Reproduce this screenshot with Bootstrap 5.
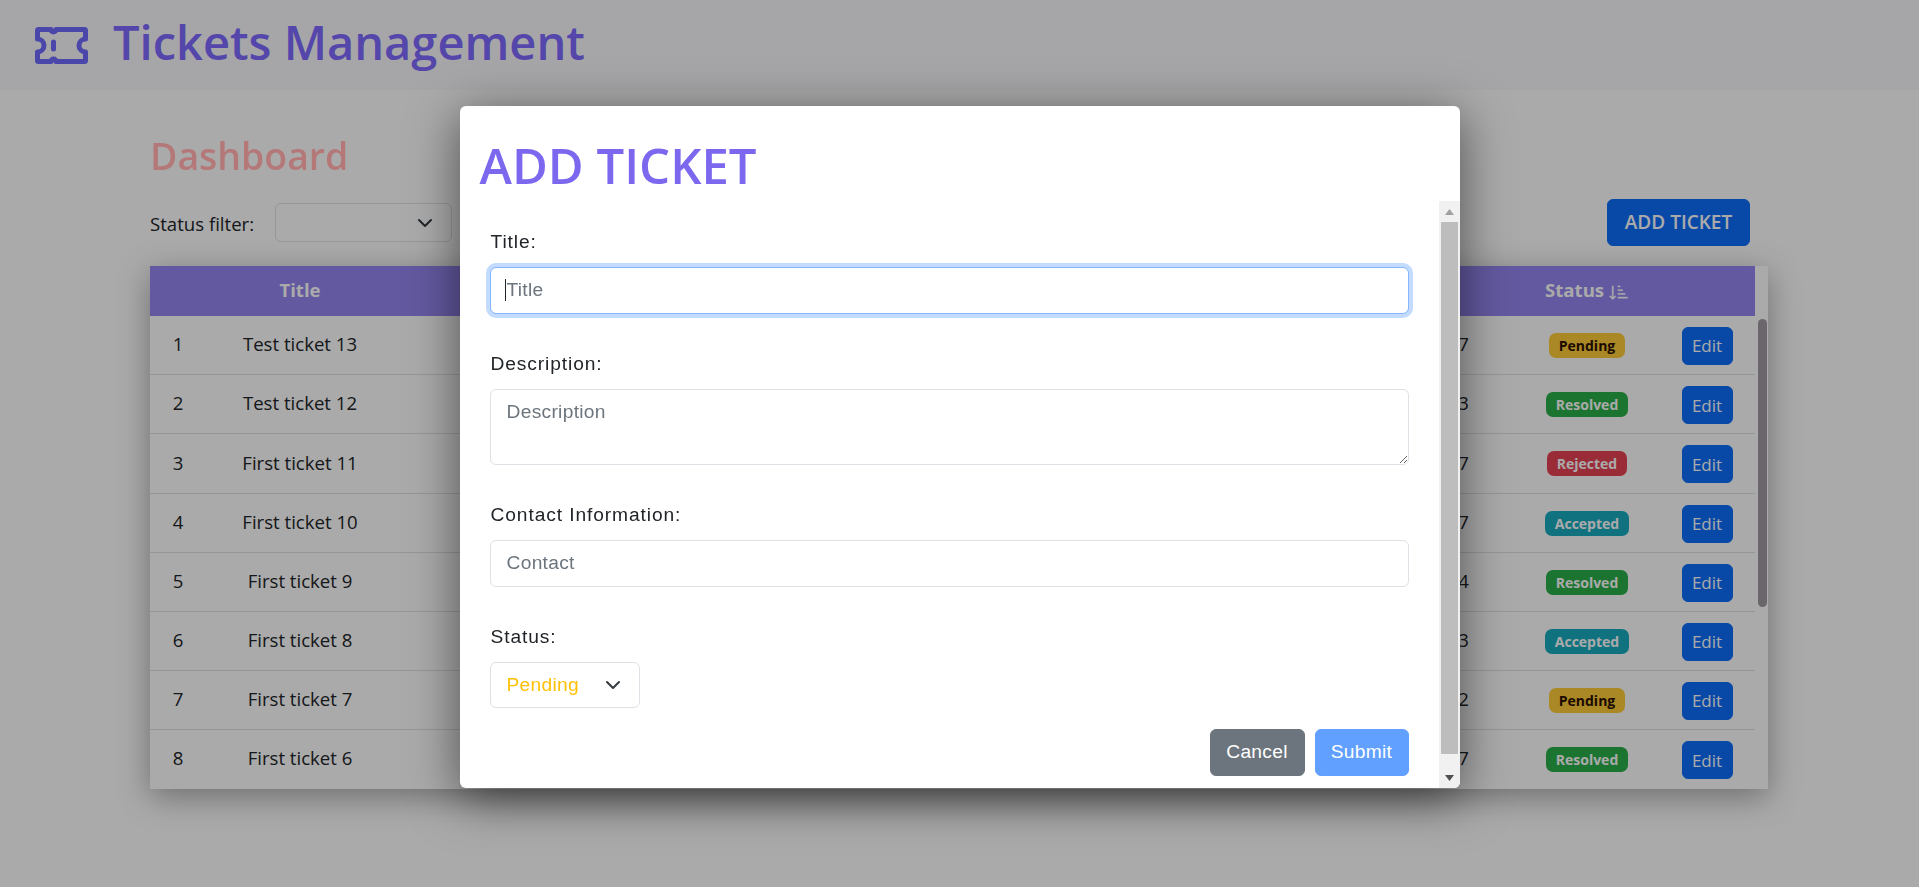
<!DOCTYPE html>
<html lang="en">
<head>
    <meta charset="UTF-8">
    <meta name="viewport" content="width=device-width, initial-scale=1.0">
    <title>Tickets Management</title>
    <link rel="stylesheet" href="https://cdn.jsdelivr.net/npm/bootstrap@5.3.0/dist/css/bootstrap.min.css">
    <style>
        body { font-family: "Open Sans", "Noto Sans", sans-serif; background: #fff; height: 887px; overflow: hidden; color: #212529; }

        /* page header */
        .app-header { height: 90px; background: #f9fafc; padding: 0 0 6px 35px; gap: 25px; }
        .app-header h1 { font-size: 47px; font-weight: 600; color: #7f69ff; margin: 0; }
        .app-logo { width: 53px; height: 37px; color: #7069ff; margin-top: 6px; }

        /* dashboard */
        .dash-wrap { padding: 0 151px 0 150px; }
        .dash-title { font-size: 37.4px; font-weight: 600; color: #b57878; margin: 44px 0 0; line-height: 44px; position: relative; z-index: 1051; }
        .dash-tools { height: 47px; margin-top: 21px; padding-right: 18px; }
        .dash-tools label { font-size: 18.6px; margin: 2px 21px 0 0; }
        .dash-filter { width: 177px; height: 39px; background-position: right 18px center; background-size: 16px 16px; }
        .btn-add { font-size: 19px; font-weight: 600; height: 47px; width: 143px; padding: 0; }
        .tickets-box { margin-top: 20px; box-shadow: 0 8px 30px rgba(0,0,0,.35); }
        .tickets-head { width: 1605px; height: 50px; background: #9586f1; color: #fff; font-weight: 700; font-size: 18.6px; }
        .sort-icon { stroke: currentColor; stroke-width: .3; }
        .tickets-main { height: 473px; overflow: hidden; background: #fff; }
        .tickets-rows { width: 1605px; }
        .rows-bar { width: 13px; padding: 3px 1px 0 3px; }
        .rows-thumb { height: 288px; background: #a099a3; border-radius: 5px; }
        .tk-row { height: 59.2px; border-bottom: 1px solid #dee2e6; font-size: 18.6px; }
        .tk-id { width: 56px; padding-bottom: 2px; }
        .tk-name { width: 188px; padding-bottom: 2px; }
        .tk-date { width: 1103px; padding: 0 28px 2px 0; }
        .tk-status { width: 180px; padding-bottom: 2px; }
        .tk-edit { width: 78px; padding: 2px 18px 0 0; }
        .st-pill { font-size: 14px; font-weight: 700; border-radius: 7px; padding: 3px 10px; line-height: 19px; }
        .st-pending { background: #ffcd39; color: #2a0f00; }
        .st-resolved { background: #2aaf4a; color: #fff; }
        .st-rejected { background: #e84355; color: #fff; }
        .st-accepted { background: #19acbf; color: #fff; }
        .btn-edit { width: 51px; height: 38px; padding: 0; font-size: 17px; }

        /* modal */
        .modal-backdrop.show { opacity: .333; }
        .ticket-dialog { max-width: 1000px; margin: 106px auto 0; }
        .ticket-content { height: 682px; border: 0; border-radius: 6px; box-shadow: 0 10px 50px rgba(0,0,0,.55); font-family: "Liberation Sans", Arial, sans-serif; overflow: hidden; }
        .ticket-top { height: 95px; padding: 24px 0 0 20px; }
        .ticket-top h2 { font-family: "Open Sans", "Noto Sans", sans-serif; font-size: 49px; font-weight: 600; color: #7b68ee; margin: 0; }
        .ticket-main { height: 587px; }
        .ticket-scroll { padding: 26px 30px 0; }
        .field-group { margin-bottom: 35px; }
        .field-group label { font-size: 19.2px; letter-spacing: .9px; line-height: 29px; margin-bottom: 11px; padding-left: 1px; color: #212529; display: block; }
        .field-input { font-size: 19.2px; letter-spacing: .3px; padding: 8px 16px; height: 46.8px; }
        .field-input::placeholder { color: #6c757d; }
        .field-area { height: 76px; resize: vertical; }
        .field-focused { border-color: #86b7fe; box-shadow: 0 0 0 .25rem rgba(13,110,253,.25); }
        .fake-caret { position: absolute; left: 15px; top: 12px; width: 1px; height: 22px; background: #212529; }
        .field-status { width: 150px; color: #ffc107; height: 46.8px; font-size: 19.2px; letter-spacing: .3px; padding: 8px 16px; background-position: right 18px center; background-size: 16px 16px; }
        .modal-actions { gap: 10px; margin-top: 21px; }
        .modal-btn { font-size: 19.2px; letter-spacing: .3px; height: 47px; padding: 0; }
        .btn-cancel { width: 95px; }
        .btn-submit { width: 94px; }
        .modal-bar { width: 21px; background: #f1f1f1; }
        .bar-btn { height: 21px; }
        .bar-thumb { height: 532px; margin: 0 2px 13px; background: #bdbdbd; }
    </style>
</head>
<body>

    <!-- Page header -->
    <header class="app-header d-flex align-items-center">
        <svg class="app-logo" viewBox="0 0 53 37" fill="none" stroke="currentColor" stroke-width="5" stroke-linejoin="round">
            <path d="M3.5 2.5H16a2.5 2.5 0 0 0 5 0H49.5a1 1 0 0 1 1 1V12a6.5 6.5 0 0 0 0 13V33.5a1 1 0 0 1-1 1H21a2.5 2.5 0 0 0-5 0H3.5a1 1 0 0 1-1-1V25a6.5 6.5 0 0 0 0-13V3.5a1 1 0 0 1 1-1z"/>
            <path d="M18.5 15v7" stroke-linecap="round"/>
        </svg>
        <h1>Tickets Management</h1>
    </header>

    <main class="dash-wrap">
        <h2 class="dash-title">Dashboard</h2>

        <div class="dash-tools d-flex align-items-center justify-content-between">
            <div class="d-flex align-items-center">
                <label for="statusFilter">Status filter:</label>
                <select id="statusFilter" class="form-select dash-filter"><option></option></select>
            </div>
            <button class="btn btn-primary btn-add">ADD TICKET</button>
        </div>

        <div class="tickets-box">
            <div class="tickets-head d-flex align-items-center text-center">
                <div class="tk-id"></div>
                <div class="tk-name">Title</div>
                <div class="tk-date"></div>
                <div class="tk-status">Status
                    <svg class="sort-icon" width="20" height="20" viewBox="0 0 16 16" fill="currentColor"><path d="M3.5 3.5a.5.5 0 0 0-1 0v8.793l-1.146-1.147a.5.5 0 0 0-.708.708l2 1.999.007.007a.497.497 0 0 0 .7-.006l2-2a.5.5 0 0 0-.707-.708L3.5 12.293V3.5zm4 .5a.5.5 0 0 1 0-1h1a.5.5 0 0 1 0 1h-1zm0 3a.5.5 0 0 1 0-1h3a.5.5 0 0 1 0 1h-3zm0 3a.5.5 0 0 1 0-1h5a.5.5 0 0 1 0 1h-5zM7 12.5a.5.5 0 0 0 .5.5h7a.5.5 0 0 0 0-1h-7a.5.5 0 0 0-.5.5z"/></svg>
                </div>
                <div class="tk-edit"></div>
            </div>
            <div class="tickets-main d-flex">
                <div class="tickets-rows" id="ticketRows"></div>
                <div class="rows-bar"><div class="rows-thumb"></div></div>
            </div>
        </div>
    </main>

    <div class="modal-backdrop show"></div>

    <!-- Add ticket modal -->
    <div class="modal d-block" tabindex="-1">
        <div class="modal-dialog ticket-dialog">
            <div class="modal-content ticket-content">
                <div class="ticket-top d-flex align-items-center"><h2>ADD TICKET</h2></div>
                <div class="ticket-main d-flex">
                    <div class="modal-body ticket-scroll">
                        <div class="field-group">
                            <label>Title:</label>
                            <div class="position-relative">
                                <input class="form-control field-input field-focused" placeholder="Title">
                                <span class="fake-caret"></span>
                            </div>
                        </div>
                        <div class="field-group">
                            <label>Description:</label>
                            <textarea class="form-control field-input field-area" placeholder="Description"></textarea>
                        </div>
                        <div class="field-group">
                            <label>Contact Information:</label>
                            <input class="form-control field-input" placeholder="Contact">
                        </div>
                        <div class="field-group mb-0">
                            <label>Status:</label>
                            <select class="form-select field-status"><option>Pending</option></select>
                        </div>
                        <div class="modal-actions d-flex justify-content-end">
                            <button class="btn btn-secondary modal-btn btn-cancel">Cancel</button>
                            <button class="btn btn-primary modal-btn btn-submit" disabled>Submit</button>
                        </div>
                    </div>
                    <div class="modal-bar flex-shrink-0">
                        <div class="bar-btn d-flex align-items-center justify-content-center">
                            <svg width="9" height="6"><path fill="#a0a0a0" d="M4.5 0 9 6H0z"/></svg>
                        </div>
                        <div class="bar-thumb"></div>
                        <div class="bar-btn d-flex align-items-center justify-content-center">
                            <svg width="9" height="6"><path fill="#505050" d="M0 0h9L4.5 6z"/></svg>
                        </div>
                    </div>
                </div>
            </div>
        </div>
    </div>

    <script src="https://cdn.jsdelivr.net/npm/bootstrap@5.3.0/dist/js/bootstrap.bundle.min.js"></script>
    <script>
        // rows of the ticket list, as far as they fit on screen
        const tickets = [
            ["Test ticket 13", "7", "Pending"], ["Test ticket 12", "3", "Resolved"],
            ["First ticket 11", "7", "Rejected"], ["First ticket 10", "7", "Accepted"],
            ["First ticket 9", "4", "Resolved"], ["First ticket 8", "3", "Accepted"],
            ["First ticket 7", "2", "Pending"], ["First ticket 6", "7", "Resolved"]
        ];
        document.getElementById("ticketRows").innerHTML = tickets.map((t, i) => `
            <div class="tk-row d-flex align-items-center text-center">
                <div class="tk-id">${i + 1}</div>
                <div class="tk-name">${t[0]}</div>
                <div class="tk-date text-end">${t[1]}</div>
                <div class="tk-status"><span class="badge st-pill st-${t[2].toLowerCase()}">${t[2]}</span></div>
                <div class="tk-edit"><button class="btn btn-primary btn-edit">Edit</button></div>
            </div>`).join("");
    </script>

</body>
</html>
